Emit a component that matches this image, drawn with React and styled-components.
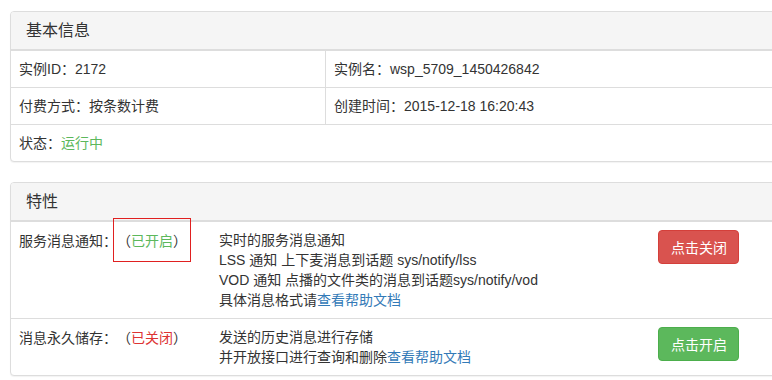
import React from "react";
import styled, { createGlobalStyle } from "styled-components";

const Global = createGlobalStyle`
  html, body { margin: 0; padding: 0; background: #fff; overflow: hidden; }
  body {
    font-family: "Liberation Sans", Arial, "Noto Sans CJK SC", sans-serif;
    font-size: 14px;
    line-height: 20px;
    color: #333;
    text-spacing-trim: space-all;
  }
`;

const Page = styled.div`
  padding: 11px 0 0 10px;
  width: 790px;
`;

const Panel = styled.section`
  border: 1px solid #ddd;
  border-radius: 4px;
  background: #fff;
  box-shadow: 0 1px 1px rgba(0, 0, 0, 0.05);
  margin-bottom: 20px;
`;

const Heading = styled.div`
  background: #f5f5f5;
  border-bottom: 2px solid #ddd;
  border-radius: 3px 3px 0 0;
  padding: 10px 15px;
  font-size: 16px;
  line-height: 17px;
  color: #333;
`;

const InfoRow = styled.div`
  display: grid;
  grid-template-columns: ${(p) => (p.$cols === 2 ? "314px 1fr" : "1fr")};
  border-top: ${(p) => (p.$first ? "none" : "1px solid #ddd")};
`;

const InfoCell = styled.div`
  padding: 8px;
  border-left: ${(p) => (p.$divider ? "1px solid #ddd" : "none")};
  white-space: nowrap;
`;

const FeatureRow = styled.div`
  display: grid;
  grid-template-columns: 200px 439px 1fr;
  border-top: ${(p) => (p.$first ? "none" : "1px solid #ddd")};
`;

const Cell = styled.div`
  padding: 8px;
  white-space: nowrap;
`;

const Status = styled.span`
  position: relative;
  font-family: "Noto Sans CJK SC", sans-serif;
  text-spacing-trim: space-all;
  color: ${(p) => p.$color};
  ${(p) =>
    p.$highlight
      ? `&::after {
    content: "";
    position: absolute;
    left: -4px;
    top: -12px;
    width: 76px;
    height: 42px;
    border: 1px solid #e02020;
    pointer-events: none;
  }`
      : ""}
`;

const Paren = styled.span`
  color: #333;
`;

const Green = styled.span`
  color: #5cb85c;
`;

const Link = styled.a`
  color: #337ab7;
  text-decoration: none;
`;

const Button = styled.button`
  font-family: "Noto Sans CJK SC", sans-serif;
  font-size: 14px;
  line-height: 20px;
  padding: 6px 12px;
  width: 81px;
  height: 34px;
  border-radius: 4px;
  color: #fff;
  background: ${(p) => (p.$variant === "danger" ? "#d9534f" : "#5cb85c")};
  border: 1px solid ${(p) => (p.$variant === "danger" ? "#d43f3a" : "#4cae4c")};
  cursor: pointer;
  display: block;
`;

export default function App() {
  return (
    <>
      <Global />
      <Page>
        <Panel>
          <Heading>基本信息</Heading>
          <InfoRow $cols={2} $first>
            <InfoCell>实例ID：2172</InfoCell>
            <InfoCell $divider>实例名：wsp_5709_1450426842</InfoCell>
          </InfoRow>
          <InfoRow $cols={2}>
            <InfoCell>付费方式：按条数计费</InfoCell>
            <InfoCell $divider>创建时间：2015-12-18 16:20:43</InfoCell>
          </InfoRow>
          <InfoRow>
            <InfoCell>
              状态：<Green>运行中</Green>
            </InfoCell>
          </InfoRow>
        </Panel>

        <Panel>
          <Heading>特性</Heading>
          <FeatureRow $first>
            <Cell>
              服务消息通知：
              <Status $color="#5cb85c" $highlight>
                <Paren>（</Paren>已开启<Paren>）</Paren>
              </Status>
            </Cell>
            <Cell>
              实时的服务消息通知
              <br />
              LSS 通知 上下麦消息到话题 sys/notify/lss
              <br />
              VOD 通知 点播的文件类的消息到话题sys/notify/vod
              <br />
              具体消息格式请<Link href="#">查看帮助文档</Link>
            </Cell>
            <Cell>
              <Button $variant="danger">点击关闭</Button>
            </Cell>
          </FeatureRow>
          <FeatureRow>
            <Cell>
              消息永久储存：
              <Status $color="#dd3333">
                <Paren>（</Paren>已关闭<Paren>）</Paren>
              </Status>
            </Cell>
            <Cell>
              发送的历史消息进行存储
              <br />
              并开放接口进行查询和删除<Link href="#">查看帮助文档</Link>
            </Cell>
            <Cell>
              <Button $variant="success">点击开启</Button>
            </Cell>
          </FeatureRow>
        </Panel>
      </Page>
    </>
  );
}
